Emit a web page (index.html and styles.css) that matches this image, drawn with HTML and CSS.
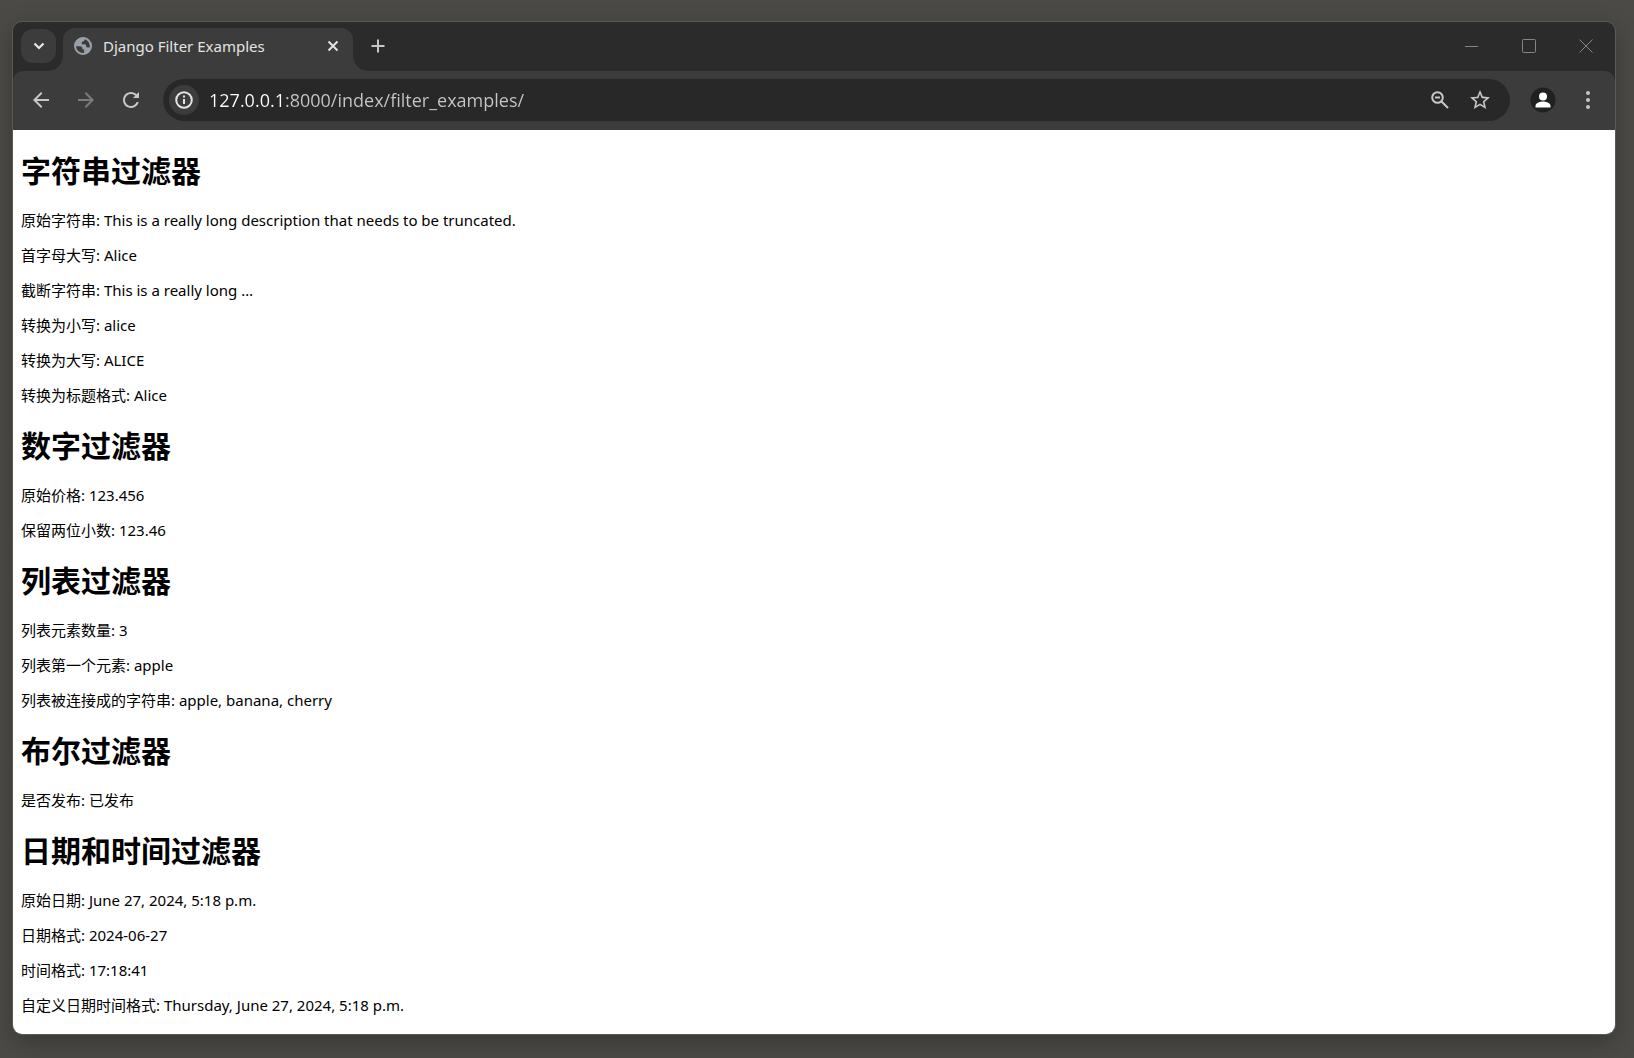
FILE: index.html
```
<!DOCTYPE html>
<html lang="zh">
<head>
  <meta charset="UTF-8">
  <meta name="viewport" content="width=device-width, initial-scale=1">
  <title>Django Filter Examples</title>
  <link rel="stylesheet" href="styles.css">
</head>
<body>
  <div class="window">
    <!-- 标签栏 -->
    <header class="tabstrip">
      <button class="tab-search" type="button" aria-label="搜索标签页">
        <svg width="12" height="8" viewBox="0 0 12 8"><path d="M1.5 1.5 6 6l4.5-4.5" fill="none" stroke="#e8e8e8" stroke-width="2.2"/></svg>
      </button>
      <div class="tab">
        <svg width="18" height="18" viewBox="0 0 18 18">
          <circle cx="9" cy="9" r="8.5" fill="#9aa0a9"/>
          <path d="M1.8 9.2h4c1.7 0 2.7.9 2.7 2.5v.9h1.700v2.500c0 .5-.3.900-.7 1.100C5.300 16.400 1.900 13.300 1.800 9.200z" fill="#3c3c3c"/>
          <path d="M10.800 2c-.1 1.500-.8 2.400-2.200 2.500-.7.100-.9.600-.9 1.300v1.500h2.600c1.200 0 1.700.6 1.800 1.800.1.900.6 1.300 1.500 1.300h2.300c.6-3.800-1.600-7.300-5.100-8.400z" fill="#3c3c3c"/>
          <circle cx="9" cy="9" r="8" fill="none" stroke="#9aa0a9" stroke-width="2"/>
        </svg>
        <span class="tab-title">Django Filter Examples</span>
        <button class="icon-button" type="button" aria-label="关闭标签页">
          <svg width="12" height="12" viewBox="0 0 12 12"><path d="m1.5 1.5 9 9m0-9-9 9" stroke="#e3e3e3" stroke-width="2"/></svg>
        </button>
      </div>
      <button class="icon-button new-tab" type="button" aria-label="新标签页">
        <svg width="14" height="14" viewBox="0 0 14 14"><path d="M7 .5v13M.5 7h13" stroke="#c7c7c7" stroke-width="2"/></svg>
      </button>
      <div class="window-controls">
        <button class="icon-button" type="button" aria-label="最小化">
          <svg width="14" height="14" viewBox="0 0 14 14"><path d="M0 7.5h13" stroke="#858585"/></svg>
        </button>
        <button class="icon-button" type="button" aria-label="最大化">
          <svg width="14" height="14" viewBox="0 0 14 14"><rect x=".5" y=".5" width="13" height="13" rx="1" fill="none" stroke="#858585"/></svg>
        </button>
        <button class="icon-button" type="button" aria-label="关闭">
          <svg width="14" height="14" viewBox="0 0 14 14"><path d="m.5.5 13 13m0-13-13 13" stroke="#858585"/></svg>
        </button>
      </div>
    </header>

    <!-- 工具栏 -->
    <nav class="toolbar">
      <button class="icon-button" type="button" aria-label="后退">
        <svg width="16" height="16" viewBox="4 4 16 16"><path d="M20 11H7.830l5.590-5.590L12 4l-8 8 8 8 1.410-1.410L7.830 13H20z" fill="#c7c7c7"/></svg>
      </button>
      <button class="icon-button" type="button" aria-label="前进" disabled>
        <svg width="16" height="16" viewBox="4 4 16 16"><path d="M4 13h12.170l-5.590 5.590L12 20l8-8-8-8-1.410 1.410L16.170 11H4z" fill="#7c7c7c"/></svg>
      </button>
      <button class="icon-button" type="button" aria-label="重新加载">
        <svg width="16" height="16" viewBox="4 4 16 16"><path d="M17.650 6.350C16.200 4.900 14.210 4 12 4c-4.420 0-7.990 3.580-7.990 8s3.570 8 7.990 8c3.730 0 6.840-2.550 7.730-6h-2.080c-.82 2.330-3.040 4-5.650 4-3.310 0-6-2.690-6-6s2.690-6 6-6c1.660 0 3.140.69 4.220 1.780L14 10h6V4z" fill="#c7c7c7"/></svg>
      </button>
      <div class="omnibox">
        <button class="site-info" type="button" aria-label="网站信息">
          <svg width="18" height="18" viewBox="0 0 18 18"><circle cx="9" cy="9" r="7.8" fill="none" stroke="#e3e3e3" stroke-width="2"/><path d="M9 4.500v2M9 8v5" stroke="#e3e3e3" stroke-width="2"/></svg>
        </button>
        <input class="address" type="text" aria-label="地址" value="127.0.0.1:8000/index/filter_examples/">
        <button class="icon-button" type="button" aria-label="缩放">
          <svg width="18" height="18" viewBox="0 0 18 18"><circle cx="6.500" cy="6.500" r="5.300" fill="none" stroke="#c7c7c7" stroke-width="2"/><path d="M4 6.500h5M10.500 10.500l6.500 6.500" stroke="#c7c7c7" stroke-width="2"/></svg>
        </button>
        <button class="icon-button" type="button" aria-label="收藏">
          <svg width="20" height="20" viewBox="2 2 20 20"><path d="m22 9.240-7.190-.62L12 2 9.190 8.630 2 9.240l5.460 4.730L5.820 21 12 17.270 18.180 21l-1.630-7.030zM12 15.400l-3.760 2.270 1-4.280-3.320-2.880 4.380-.38L12 6.100l1.710 4.040 4.380.38-3.320 2.880 1 4.280z" fill="#c7c7c7"/></svg>
        </button>
      </div>
      <button class="icon-button" type="button" aria-label="用户">
        <svg width="26" height="26" viewBox="0 0 26 26"><circle cx="13" cy="13" r="12.5" fill="#1f2121"/><circle cx="13" cy="9.500" r="4" fill="#fff"/><path d="M5.500 20.500v-1.800c0-2.800 5-4.200 7.500-4.200s7.500 1.400 7.500 4.200v1.800z" fill="#fff"/></svg>
      </button>
      <button class="icon-button" type="button" aria-label="菜单">
        <svg width="6" height="18" viewBox="0 0 6 18"><g fill="#c7c7c7"><circle cx="3" cy="2" r="2"/><circle cx="3" cy="9" r="2"/><circle cx="3" cy="16" r="2"/></g></svg>
      </button>
    </nav>

    <main class="page">
      <h1>字符串过滤器</h1>
      <p>原始字符串: This is a really long description that needs to be truncated.</p>
      <p>首字母大写: Alice</p>
      <p>截断字符串: This is a really long …</p>
      <p>转换为小写: alice</p>
      <p>转换为大写: ALICE</p>
      <p>转换为标题格式: Alice</p>

      <h1>数字过滤器</h1>
      <p>原始价格: 123.456</p>
      <p>保留两位小数: 123.46</p>

      <h1>列表过滤器</h1>
      <p>列表元素数量: 3</p>
      <p>列表第一个元素: apple</p>
      <p>列表被连接成的字符串: apple, banana, cherry</p>

      <h1>布尔过滤器</h1>
      <p>是否发布: 已发布</p>

      <h1>日期和时间过滤器</h1>
      <p>原始日期: June 27, 2024, 5:18 p.m.</p>
      <p>日期格式: 2024-06-27</p>
      <p>时间格式: 17:18:41</p>
      <p>自定义日期时间格式: Thursday, June 27, 2024, 5:18 p.m.</p>
    </main>
  </div>
</body>
</html>
```
FILE: styles.css
```
* {
  box-sizing: border-box;
}
body {
  display: flex;
  min-height: 100vh;
  margin: 0;
  padding: 21px 18px 23px 12px;
  background-color: #4b4a46;
  font-family: "Noto Sans", "Noto Sans CJK SC", sans-serif;
}
button {
  padding: 0;
  border: none;
  background: none;
}
svg {
  display: block;
}
.window {
  display: flex;
  flex: 1;
  flex-direction: column;
  min-width: 0;
  overflow: hidden;
  border: 1px solid #5a5a59;
  border-radius: 10px;
  background-color: #2b2b2b;
  box-shadow: 0 8px 24px rgba(0, 0, 0, 0.25);
}

/* 标签栏 */
.tabstrip {
  display: flex;
  align-items: center;
  height: 49px;
  padding: 0 8px 1px;
}
.tab-search {
  display: flex;
  align-items: center;
  justify-content: center;
  width: 35px;
  height: 34px;
  border-radius: 12px;
  background-color: #3c3c3c;
}
.icon-button {
  display: flex;
  flex-shrink: 0;
  align-items: center;
  justify-content: center;
  width: 28px;
  height: 28px;
}
.tab {
  position: relative;
  display: flex;
  align-items: center;
  align-self: stretch;
  width: 290px;
  margin: 6px 0 -1px 7px;
  padding: 0 6px 7px 11px;
  border-radius: 12px 12px 0 0;
  background-color: #3c3c3c;
}
/* 标签底部两侧的弧形 */
.tab::before,
.tab::after {
  content: "";
  position: absolute;
  bottom: 0;
  width: 14px;
  height: 14px;
}
.tab::before {
  right: 100%;
  background: radial-gradient(circle at 0 0, transparent 13px, #3c3c3c 14px);
}
.tab::after {
  left: 100%;
  background: radial-gradient(circle at 100% 0, transparent 13px, #3c3c3c 14px);
}
.tab-title {
  flex: 1;
  margin-left: 11px;
  color: #e3e3e3;
  font-size: 15px;
  line-height: 20px;
}
.new-tab {
  margin-left: 11px;
}
.window-controls {
  display: flex;
  gap: 29px;
  margin-left: auto;
  padding-right: 7px;
}

/* 工具栏 */
.toolbar {
  display: flex;
  align-items: center;
  gap: 17px;
  height: 59px;
  padding: 0 13px 1px 14px;
  border-radius: 10px 10px 0 0;
  background-color: #3c3c3c;
}
.omnibox {
  display: flex;
  flex: 1;
  align-items: center;
  gap: 12px;
  min-width: 0;
  height: 42px;
  margin: 0 2px 0 1px;
  padding: 0 16px 0 6px;
  border-radius: 21px;
  background-color: #282828;
}
.site-info {
  display: flex;
  flex-shrink: 0;
  align-items: center;
  justify-content: center;
  width: 30px;
  height: 30px;
  border-radius: 50%;
  background-color: #3c3c3c;
}
/* 主机名比路径稍亮 */
.address {
  flex: 1;
  min-width: 0;
  margin-left: -2px;
  padding: 0;
  border: none;
  outline: none;
  background: linear-gradient(90deg, #fff 74px, #c7c7c7 74px);
  -webkit-background-clip: text;
  background-clip: text;
  color: transparent;
  font-family: "Open Sans", sans-serif;
  font-size: 18px;
  line-height: 26px;
}

/* 页面内容 */
.page {
  flex: 1;
  padding: 0 8px;
  background-color: #fff;
  color: #000;
  font-size: 15px;
  line-height: 20px;
}
.page h1 {
  margin: 21px 0 19px;
  font-size: 30px;
  line-height: 40px;
}
.page p {
  margin: 15px 0;
}
```
